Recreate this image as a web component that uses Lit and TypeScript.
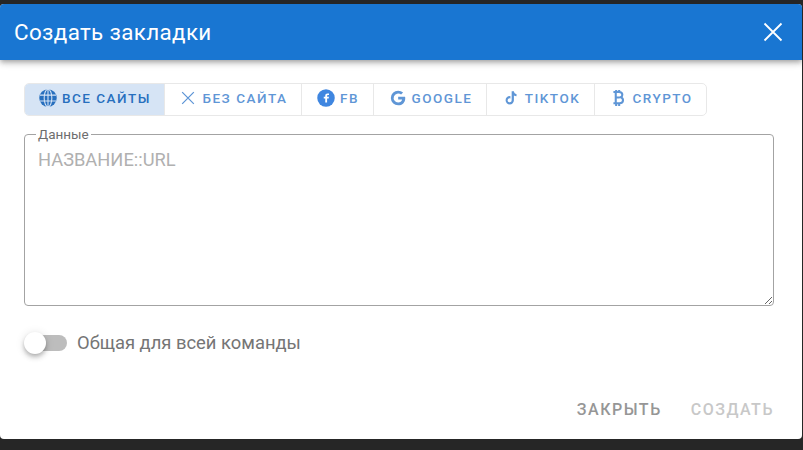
import { LitElement, html, css, svg } from "lit";
import { customElement } from "lit/decorators.js";

const icons: Record<string, unknown> = {
  globe: svg`<svg viewBox="0 0 24 24" width="20" height="20"><circle cx="12" cy="12" r="10.500" fill="currentColor"/><g fill="none" stroke="#d6e4f5" stroke-width="1.300"><ellipse cx="12" cy="12" rx="4.600" ry="10.500"/><path d="M12 1.500v21M2.300 8.500h19.400M2.300 15.500h19.400"/></g></svg>`,
  close: svg`<svg viewBox="0 0 24 24" width="20" height="20"><path d="M5 5l14 14M19 5L5 19" stroke="currentColor" stroke-width="1.500" fill="none"/></svg>`,
  fb: svg`<svg viewBox="0 0 24 24" width="20" height="20"><circle cx="12" cy="12" r="10.500" fill="#3f86e0"/><path d="M13.300 17.500v-4.900h1.900l.3-2.100h-2.200V9.400c0-.6.300-1 1-1h1.300V6.600c-.4-.1-1-.1-1.700-.1-1.700 0-2.800 1-2.800 2.800v1.200H9.300v2.100h1.800v4.900z" fill="#fff"/></svg>`,
  google: svg`<svg viewBox="0 0 24 24" width="20" height="20"><path d="M12.200 10.400v3.300h4.800c-.5 2.200-2.400 3.700-4.800 3.700a5.400 5.400 0 1 1 3.500-9.500l2.400-2.400A8.900 8.900 0 0 0 12.200 3.200a8.800 8.800 0 1 0 0 17.600c5.100 0 8.500-3.600 8.500-8.600 0-.6-.1-1.200-.2-1.800z" fill="currentColor"/></svg>`,
  tiktok: svg`<svg viewBox="0 0 24 24" width="20" height="20"><path d="M12.800 4h2.700c.2 1.900 1.300 3.100 3.100 3.300v2.600c-1.200 0-2.200-.4-3.100-1v5.800a5 5 0 1 1-5-5c.3 0 .5 0 .8.100v2.700a2.400 2.400 0 1 0 1.500 2.200z" fill="currentColor"/></svg>`,
  btc: svg`<svg viewBox="0 0 24 24" width="20" height="20"><path d="M6.500 4.800h6.800c2.400 0 3.900 1.300 3.900 3.400 0 1.500-.8 2.500-2 3 1.700.5 2.800 1.700 2.800 3.400 0 2.200-1.700 3.700-4.200 3.700H6.500M9.300 4.800v13.500M9.300 11.300h4.500M9.800 2.500v2.300M13.400 2.500v2.300M9.800 18.300v3.200M13.400 18.300v3.200" fill="none" stroke="currentColor" stroke-width="2.500"/></svg>`,
};

const tabs = [
  { icon: "globe", label: "Все сайты", w: 139, active: true },
  { icon: "close", label: "Без сайта", w: 137 },
  { icon: "fb", label: "FB", w: 72 },
  { icon: "google", label: "Google", w: 113 },
  { icon: "tiktok", label: "TikTok", w: 108 },
  { icon: "btc", label: "Crypto", w: 112 },
];

@customElement("app-root")
export class AppRoot extends LitElement {
  static styles = css`
    :host {
      display: flex;
      flex-direction: column;
      box-sizing: border-box;
      width: 803px;
      height: 450px;
      padding: 4px 1px 11px 0;
      background: #262626;
      font-family: Roboto, "Noto Sans", sans-serif;
      overflow: hidden;
    }
    .dialog {
      flex: 1;
      display: flex;
      flex-direction: column;
      background: #fff;
      border-radius: 4px;
      overflow: hidden;
    }
    .header {
      flex: none;
      height: 56px;
      display: flex;
      align-items: center;
      justify-content: space-between;
      padding: 0 14px;
      background: #1976d2;
      color: #fff;
      box-shadow: 0 2px 4px -1px rgba(0,0,0,.2), 0 4px 5px rgba(0,0,0,.14), 0 1px 10px rgba(0,0,0,.12);
    }
    .title {
      font-size: 22.400px;
      font-weight: 400;
      letter-spacing: 0.350px;
      padding-bottom: 1px;
    }
    .x {
      display: flex;
      margin-right: 3px;
    }
    .content {
      flex: 1;
      display: flex;
      flex-direction: column;
      padding: 23px 28px 0 24px;
    }
    .tabs {
      display: flex;
      align-self: flex-start;
      height: 33px;
      box-sizing: border-box;
      border: 1px solid #e8e8e8;
      border-radius: 5px;
      overflow: hidden;
    }
    .tab {
      display: flex;
      align-items: center;
      justify-content: center;
      gap: 4px;
      box-sizing: border-box;
      padding-bottom: 3px;
      border-left: 1px solid #e8e8e8;
      color: #5f96d6;
      font-size: 13.500px;
      font-weight: 500;
      letter-spacing: 1.500px;
      text-transform: uppercase;
      white-space: nowrap;
    }
    .tab:first-child { border-left: none; }
    .tab.active {
      background: #d6e4f5;
      color: #276fbe;
    }
    fieldset {
      margin: 11px 0 0;
      padding: 0 13px;
      height: 179px;
      box-sizing: border-box;
      border: 1px solid #a3a3a3;
      border-radius: 4px;
    }
    legend {
      margin-left: -2px;
      padding: 0 2px;
      color: #6e6e6e;
      font-size: 13.500px;
      line-height: 14px;
    }
    textarea {
      display: block;
      width: calc(100% + 13px);
      height: 164px;
      box-sizing: border-box;
      border: none;
      outline: none;
      padding: 7px 0 0;
      margin: 0;
      font: 18.300px/24px Roboto, sans-serif;
      background: transparent;
      resize: vertical;
    }
    textarea::placeholder { color: #b0b0b0; opacity: 1; }
    .switch-row {
      display: flex;
      align-items: center;
      gap: 10px;
      margin-top: 25px;
      height: 24px;
      color: #757575;
      font-size: 18.400px;
    }
    .switch-label { padding-bottom: 2px; }
    .track {
      position: relative;
      width: 37px;
      height: 16px;
      margin-left: 6px;
      border-radius: 8px;
      background: #bdbdbd;
    }
    .knob {
      position: absolute;
      left: -6px;
      top: -3px;
      width: 22px;
      height: 22px;
      border-radius: 50%;
      background: #fff;
      box-shadow: 0 2px 4px -1px rgba(0,0,0,.2), 0 4px 5px rgba(0,0,0,.14), 0 1px 10px rgba(0,0,0,.12);
    }
    .actions {
      display: flex;
      justify-content: flex-end;
      gap: 29px;
      margin-top: auto;
      padding: 0 0 19px 0;
      font-size: 16px;
      font-weight: 500;
      letter-spacing: 1.500px;
      line-height: 20px;
      text-transform: uppercase;
    }
    .close-btn { color: #969696; }
    .create-btn { color: #c8c8c8; }
  `;

  render() {
    return html`
      <div class="dialog">
        <div class="header">
          <span class="title">Создать закладки</span>
          <span class="x"><svg viewBox="0 0 24 24" width="24" height="24"><path d="M3.500 3.500l17 17M20.500 3.500l-17 17" stroke="#fff" stroke-width="1.800" fill="none"/></svg></span>
        </div>
        <div class="content">
          <div class="tabs">
            ${tabs.map(
              (t) => html`<div class="tab ${t.active ? "active" : ""}" style="width:${t.w}px">${icons[t.icon]}<span>${t.label}</span></div>`
            )}
          </div>
          <fieldset>
            <legend>Данные</legend>
            <textarea placeholder="НАЗВАНИЕ::URL"></textarea>
          </fieldset>
          <div class="switch-row">
            <div class="track"><div class="knob"></div></div>
            <span class="switch-label">Общая для всей команды</span>
          </div>
          <div class="actions">
            <span class="close-btn">Закрыть</span>
            <span class="create-btn">Создать</span>
          </div>
        </div>
      </div>
    `;
  }
}
